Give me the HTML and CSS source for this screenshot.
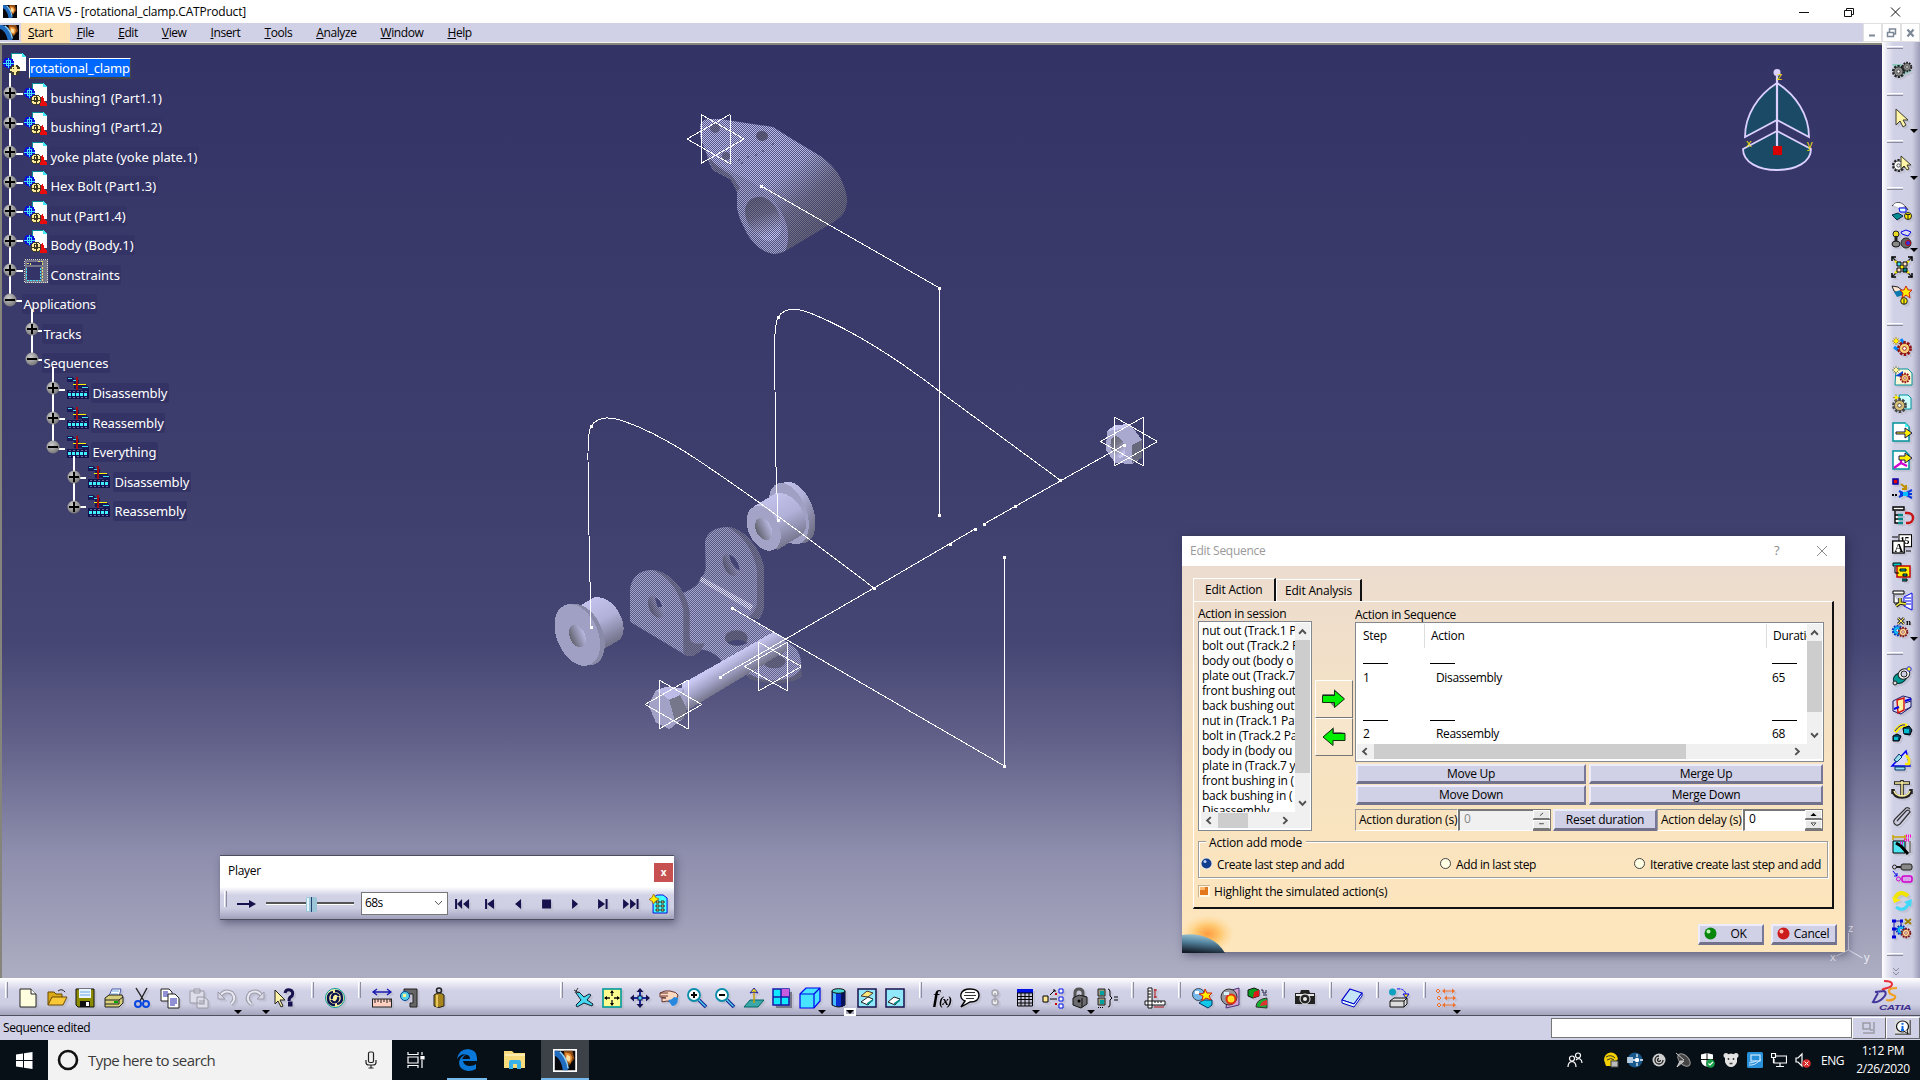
FILE: index.html
```html
<!DOCTYPE html>
<html lang="en">
<head>
<meta charset="utf-8">
<title>CATIA V5 - [rotational_clamp.CATProduct]</title>
<link rel="stylesheet" href="styles.css">
</head>
<body>
<svg class="defs" width="0" height="0" aria-hidden="true">
  <defs>
    <symbol id="logo" viewBox="0 0 20 20"><rect width="20" height="20" fill="#08080c"/><path d="M9 0h8l2 8-5 7-5-6z" fill="#8a4a14"/><path d="M10 2l5 1 2 4-2 6-4-3z" fill="#e88a30"/><path d="M12 4l3 2v4l-2 1-2-3z" fill="#ffe0a0"/><path d="M3 0c5 4 8 10 10 20H8C7 12 4 7 0 5V0z" fill="#1f6cc0"/><path d="M5 1c5 5 7 10 8 17" stroke="#8cd0ff" stroke-width="1.600" fill="none"/></symbol>
    <symbol id="part" viewBox="0 0 24 24"><path d="M8 1h11l4 4v14H12L8 12z" fill="#fff"/><path d="M8 8V1h11" stroke="#008c99" fill="none"/><path d="M19 1l4 4h-4z" fill="#3fe8f4"/><circle cx="5.500" cy="11" r="5.500" fill="#0d10d8"/><path d="M3.500 8.500h4v5h-4zM5.500 6v10M0 11h11" stroke="#40dcf8" fill="none"/><path d="M16 15l3-1 1 4 3 4v2h-7z" fill="#e80c0c"/><circle cx="12" cy="18" r="5.500" fill="#40402a"/><circle cx="12" cy="18" r="4.500" fill="#ffe99a"/><path d="M10.500 15.500h3v4h-3zM12 13v10M7 18h10" stroke="#3b3620" fill="none"/></symbol>
    <symbol id="seq" viewBox="0 0 22 22"><path d="M0 0h5l3 3h4v5h7l3 3v5H15v-4H7V5H0z" fill="#191957"/><path d="M1 1.500h4M6 3.500h3M15 10.500h6M18 14.500h3" stroke="#3fe0f0"/><path d="M6 7.500h13" stroke="#fff200"/><rect x="9" width="2" height="13" fill="#a40c10"/><rect y="13" width="22" height="9" fill="#131350"/><path d="M1 17.500h20" stroke="#3ff0ff" stroke-width="3" stroke-dasharray="3 1"/><path d="M2 14.500h19M2 20.500h19" stroke="#6b6b98" stroke-dasharray="2 2"/></symbol>
    <radialGradient id="ballg" cx=".4" cy=".35" r=".65"><stop offset="0" stop-color="#cdcdcd"/><stop offset="1" stop-color="#777"/></radialGradient>
    <g id="plus"><circle r="6.500" fill="url(#ballg)"/><path d="M-5 0H5M0-5V5" stroke="#000" stroke-width="2"/></g>
    <g id="minus"><circle r="6.500" fill="url(#ballg)"/><path d="M-5 0H5" stroke="#000" stroke-width="2"/></g>
    <symbol id="up" viewBox="0 0 8 6"><path d="M1 5l3-3.200L7 5" fill="none" stroke="#505050" stroke-width="1.700"/></symbol>
    <symbol id="down" viewBox="0 0 8 6"><path d="M1 1l3 3.200L7 1" fill="none" stroke="#505050" stroke-width="1.700"/></symbol>
    <symbol id="left" viewBox="0 0 6 8"><path d="M5 1L1.800 4 5 7" fill="none" stroke="#505050" stroke-width="1.700"/></symbol>
    <symbol id="right" viewBox="0 0 6 8"><path d="M1 1l3.200 3L1 7" fill="none" stroke="#505050" stroke-width="1.700"/></symbol>
    <pattern id="chk" width="2" height="2" patternUnits="userSpaceOnUse"><rect width="2" height="2" fill="#3c3c3c"/><path d="M0 0h1v1H0zM1 1h1v1H1z" fill="#fff"/></pattern>
    <mask id="dither" maskUnits="userSpaceOnUse" x="0" y="45" width="1882" height="933"><rect y="45" width="1882" height="933" fill="url(#chk)" shape-rendering="crispEdges"/></mask>
    <linearGradient id="tube" x1=".3" y1="0" x2=".75" y2="1"><stop offset="0" stop-color="#c4c4ee"/><stop offset=".45" stop-color="#b0b0d8"/><stop offset="1" stop-color="#66667a"/></linearGradient>
    <linearGradient id="hole"><stop offset="0" stop-color="#62626f"/><stop offset="1" stop-color="#b9b9e2"/></linearGradient>
    <linearGradient id="holev" x1="0" y1="0" x2=".3" y2="1"><stop offset="0" stop-color="#62626f"/><stop offset=".5" stop-color="#777789"/><stop offset="1" stop-color="#c8c8f4"/></linearGradient>
    <linearGradient id="arm" gradientUnits="userSpaceOnUse" x1="765" y1="165" x2="815" y2="225"><stop offset="0" stop-color="#babae8"/><stop offset=".25" stop-color="#b4b4e0"/><stop offset=".65" stop-color="#7c7c92"/><stop offset="1" stop-color="#6a6a78"/></linearGradient>
    <linearGradient id="shaft" gradientUnits="userSpaceOnUse" x1="560" y1="600" x2="600" y2="665"><stop offset="0" stop-color="#c8c8f2"/><stop offset=".4" stop-color="#a6a6cc"/><stop offset="1" stop-color="#6a6a7e"/></linearGradient>
    <g id="star" fill="none" stroke="#fff"><path d="M-14.500-24.500v49M14.500-24.500v49M-28.500 0L14.500-24.500M-28.500 0L14.500 24.500M28.500 0L-14.500-24.500M28.500 0L-14.500 24.500"/></g>
    <g id="gear"><circle cx="10" cy="10" r="7" fill="none" stroke-width="3.500" stroke-dasharray="2.800 1.600"/><circle cx="10" cy="10" r="6"/><circle cx="10" cy="10" r="2.200" fill="#fff"/></g>
  </defs>
</svg>

<div class="window">
  <header class="titlebar">
    <svg class="applogo" width="14" height="13"><svg viewBox="0 0 20 20" width="14" height="13" preserveAspectRatio="none"><use href="#logo"/></svg></svg>
    <span class="title">CATIA V5 - [rotational_clamp.CATProduct]</span>
    <svg class="winbtns" width="112" height="20" fill="none" stroke="#111"><path d="M0 10.500h10M45.500 8.500h7v6h-7zM47.500 8V6.500h7v6H53M92 5.500l9 9M101 5.500l-9 9"/></svg>
  </header>
  <nav class="menubar">
    <svg class="menulogo" width="19" height="16"><svg viewBox="0 0 20 20" width="19" height="15" preserveAspectRatio="none"><use href="#logo"/></svg></svg>
    <span class="menu active"><u>S</u>tart</span><span class="menu"><u>F</u>ile</span><span class="menu"><u>E</u>dit</span><span class="menu"><u>V</u>iew</span><span class="menu"><u>I</u>nsert</span><span class="menu"><u>T</u>ools</span><span class="menu"><u>A</u>nalyze</span><span class="menu"><u>W</u>indow</span><span class="menu"><u>H</u>elp</span>
    <div class="mdi">
      <svg width="17" height="17"><path d="M5 11.500h6" stroke="#7c8898" stroke-width="2"/></svg>
      <svg width="17" height="17" fill="none" stroke="#7c8898" stroke-width="1.500"><path d="M4.500 8.500h6v4h-6zM6.500 8V5h6v5h-2"/></svg>
      <svg width="17" height="17" stroke="#7c8898" stroke-width="2.200"><path d="M5.500 5.500l6 7M11.500 5.500l-6 7"/></svg>
    </div>
  </nav>

  <div class="middle">
    <main class="viewport">
      <svg class="scene" viewBox="0 45 1882 933" width="1882" height="933">
        <g mask="url(#dither)">
          <path d="M700 137L700 125C702 121 704 120 707 119L720 119 773 127 792 139 822 157C832 165 837 171 840 177 845 187 848 197 847 203L845 211C842 216 838 219 834 222L787 250C783 253 779 254 775 254 768 253 764 251 760 248 752 240 747 233 744 227 740 220 738 213 737 207L737 192C736 187 733 182 730 179L713 170C710 165 708 160 707 155z" fill="url(#arm)"/>
          <path d="M713 170L716 164 748 180C768 190 782 208 787 226 789 236 788 246 785 251L775 254C760 253 748 238 744 227 739 218 737 208 737 203L737 192C736 186 733 182 730 179z" fill="#a6a6ce"/>
          <path d="M707 155L713 170 730 179 737 192 740 188 732 176 717 166z" fill="#77778e"/>
          <path d="M762 197C774 200 783 215 781 229 780 239 772 243 764 240 753 234 745 222 745 211 746 201 753 196 762 197z" fill="url(#holev)"/>
          <ellipse cx="762" cy="136" rx="6" ry="5" fill="#666678"/><ellipse cx="715" cy="128" rx="5" ry="5" fill="#73738a"/><ellipse cx="726" cy="156" rx="4" ry="4" fill="#73738a"/>
          <path d="M741 163h2M747 157h2M755 155h2M762 151h2M772 144h2M738 160h2" stroke="#444460"/>
        </g>
        <g transform="translate(540 460) scale(.33333)" shape-rendering="crispEdges">
          <g>
            <ellipse cx="766" cy="157" rx="54" ry="96" transform="rotate(-20 766 157)" fill="url(#tube)"/>
            <ellipse cx="746" cy="161" rx="54" ry="96" transform="rotate(-20 746 161)" fill="#a0a0c4"/>
            <path d="M640 140L710 98C755 95 792 140 798 185 800 205 795 218 780 228L712 270z" fill="url(#tube)"/>
            <ellipse cx="671" cy="205" rx="46" ry="71" transform="rotate(-25 671 205)" fill="#a3a3c8"/>
            <ellipse cx="671" cy="207" rx="23" ry="35" transform="rotate(-25 671 207)" fill="url(#hole)"/>
          </g>
          <g>
            <path d="M115 440L165 411C215 408 250 465 251 505 251 525 245 535 235 542L190 568z" fill="url(#tube)"/>
            <ellipse cx="126" cy="524" rx="62" ry="97" transform="rotate(-23 126 524)" fill="#8989a8"/>
            <ellipse cx="112" cy="525" rx="62" ry="97" transform="rotate(-23 112 525)" fill="#a0a0c4"/>
            <ellipse cx="112" cy="528" rx="23" ry="35" transform="rotate(-23 112 528)" fill="url(#hole)"/>
          </g>
        </g>
        <g mask="url(#dither)"><g transform="translate(540 460) scale(.33333)">
          <path d="M425 400C450 392 475 378 485 352L640 455 625 470 705 520 760 560C790 580 787 635 775 650 740 675 665 672 620 645L600 608H550C520 570 500 572 450 560z" fill="#a6a6cf"/>
          <path d="M485 352C495 340 497 330 497 320L495 245C500 215 530 201 562 201 610 203 662 265 671 320V440C670 455 662 470 655 478L625 468 636 450z" fill="#9d9dc2"/>
          <path d="M562 201C610 203 662 265 671 320V440C669 455 662 470 652 478L625 470C640 462 651 445 651 425V330C640 270 610 225 562 201z" fill="#75758c"/>
          <path d="M485 350L640 436 632 452 478 362z" fill="#e6e6ff"/>
          <path d="M270 485V390C275 345 305 330 338 330 390 335 440 390 449 455V545L500 552 455 588 440 587z" fill="#a3a3ca"/>
          <path d="M338 330C390 335 440 390 449 455V530C450 550 465 553 495 550L480 575 460 588 440 587 430 580V450C420 400 390 350 338 330z" fill="#75758c"/>
          <ellipse cx="573" cy="314" rx="22" ry="36" transform="rotate(-25 573 314)" fill="url(#hole)"/><path d="M568 283c18 8 30 28 31 50-18-10-30-28-31-50z" fill="#454575"/>
          <ellipse cx="349" cy="440" rx="22" ry="36" transform="rotate(-25 349 440)" fill="url(#hole)"/><path d="M344 412c12 5 20 14 23 28l-14 2z" fill="#454575"/>
          <ellipse cx="589" cy="534" rx="34" ry="23" fill="#666678"/><path d="M563 548q25-18 60 0-30 18-60 0z" fill="#454575"/>
          <ellipse cx="703" cy="605" rx="34" ry="20" fill="#666678"/><path d="M625 640C670 672 760 670 783 625L786 650C740 680 660 670 625 655z" fill="#666678"/>
        </g></g>
        <g transform="translate(540 460) scale(.33333)" shape-rendering="crispEdges">
          <path d="M425 672L695 519C720 515 745 540 743 570L440 752z" fill="url(#shaft)"/>
          <path d="M325 735L348 690 380 680 430 685 440 745 430 775 388 808 348 788z" fill="#a2a2c7"/><path d="M348 690L380 680 430 685 418 707 388 720z" fill="#bcbce6"/><path d="M388 720L420 705 440 745 432 775 405 785z" fill="#77778c"/>
        </g>
        <g shape-rendering="crispEdges"><path d="M1107 431l8-6 15-1 12 16v18l-10 6-17-1-9-13z" fill="#a9a9d0"/><path d="M1132 445l10-5v18l-10 5z" fill="#68687c"/><path d="M1107 431l8-6 15-1-9 5z" fill="#c6c6f0"/><ellipse cx="1118" cy="447" rx="7" ry="11" transform="rotate(-20 1118 447)" fill="url(#holev)"/></g>
        <g fill="none" stroke="#fff" stroke-width="1" shape-rendering="crispEdges">
          <path d="M761 186L939.500 288V515M1004.500 557V766L732 608M720 677L874 588 975 529M984 524L1124 445"/>
          <path d="M778 520L776 467 775 390C774 345 774 328 778 317C786 306 799 308 815 315C860 334 900 361 939 391C980 421 1020 451 1060 480"/>
          <path d="M591 627L589 535 588 460C588 440 588 434 591 426C599 415 612 417 626 422C665 436 700 461 740 489C786 521 830 555 874 588"/>
          <use href="#star" x="715.500" y="139"/><use href="#star" x="1129" y="441.500"/><use href="#star" x="673.500" y="704.500"/><use href="#star" x="773" y="666.500"/>
        </g>
        <path d="M759.500 186.500h3M938 288.500h3M938 515.500h3M776.500 317.500h3M589.500 426.500h3M1058.500 480.500h3M1122.500 445.500h3M872.500 588.500h3M948.500 544.500h3M973.500 529.500h3M982.500 524.500h3M1013.500 506.500h3M718.500 677.500h3M589.500 627.500h3M776.500 520.500h3M730.500 608.500h3M1003 766.500h3M1003 557.500h3" stroke="#fff" stroke-width="3" shape-rendering="crispEdges"/>
        <g stroke="#dcd0ff" stroke-width="1.800" fill="#1a4a66">
          <path d="M1777 83C1758 95 1745 115 1745 137L1777 120 1809 137C1809 115 1796 95 1777 83z"/>
          <path d="M1777 131L1743 149C1743 162 1758 170 1777 170S1811 162 1811 149z"/>
          <path d="M1777 76V146" stroke-width="2.200"/>
        </g>
        <circle cx="1777" cy="72.500" r="3.500" fill="#dcd0ff"/><rect x="1773" y="146" width="9" height="9" fill="#d60000"/>
        <g class="axis gold"><text x="1777" y="80">z</text><text x="1746" y="147">x</text><text x="1807" y="148">y</text></g>
        <path d="M1848.500 933v17l14 8M1848.500 950l-12 6" fill="none" stroke="#e4e4ee"/>
        <g class="axis"><text x="1848" y="932">z</text><text x="1830" y="961">x</text><text x="1864" y="961">y</text></g>
      </svg>

      <section class="tree">
        <svg class="wires" width="130" height="500" fill="none" stroke="#fff" stroke-width="2"><path d="M10 28V261M10 49h13M10 79h13M10 109h13M10 138h13M10 167h13M10 196h13M10 226h13M10 256h13M32 265V315M32 286h12M32 315h12M53 325V403M53 345h12M53 374h12M53 404h12M74 412V462M74 433h12M74 462h12"/></svg>
        <div class="row root"><svg width="24" height="24" viewBox="0 0 24 24"><path d="M8 1h11l4 4v14H12L8 12z" fill="#fff"/><path d="M8 8V1h11" stroke="#008c99" fill="none"/><path d="M19 1l4 4h-4z" fill="#3fe8f4"/><circle cx="5.500" cy="11" r="5.500" fill="#0d10d8"/><path d="M3.500 8.500h4v5h-4zM5.500 6v10M0 11h11" stroke="#40dcf8" fill="none"/><circle cx="12" cy="18" r="5.500" fill="#40402a"/><path d="M9.500 15.500h4v4h-4zM12 13v10M7 18h10" stroke="#ffe99a" fill="none" stroke-width="1.400"/></svg><span>rotational_clamp</span></div>
        <div class="row l1"><svg class="pi"><use href="#part"/></svg><span>bushing1 (Part1.1)</span></div>
        <div class="row l1"><svg class="pi"><use href="#part"/></svg><span>bushing1 (Part1.2)</span></div>
        <div class="row l1"><svg class="pi"><use href="#part"/></svg><span>yoke plate (yoke plate.1)</span></div>
        <div class="row l1"><svg class="pi"><use href="#part"/></svg><span>Hex Bolt (Part1.3)</span></div>
        <div class="row l1"><svg class="pi"><use href="#part"/></svg><span>nut (Part1.4)</span></div>
        <div class="row l1"><svg class="pi"><use href="#part"/></svg><span>Body (Body.1)</span></div>
        <div class="row l1"><svg class="pi" viewBox="0 0 24 24"><rect x=".5" y=".5" width="23" height="23" fill="#77778c" stroke="#d8d8d0" stroke-dasharray="1 1"/><path d="M3 3h15v3H3zM3 8h14v13H3z" fill="#343468"/><path d="M2.500 9v12h14V9" fill="none" stroke="#3fe0f8" stroke-dasharray="2 1"/><path d="M3 4h3v3M14 2h4v4M18 8v14" fill="none" stroke="#e8e070" stroke-dasharray="2 1"/></svg><span>Constraints</span></div>
        <div class="row l0"><span>Applications</span></div>
        <div class="row l2"><span>Tracks</span></div>
        <div class="row l2"><span>Sequences</span></div>
        <div class="row l3"><svg class="si"><use href="#seq"/></svg><span>Disassembly</span></div>
        <div class="row l3"><svg class="si"><use href="#seq"/></svg><span>Reassembly</span></div>
        <div class="row l3"><svg class="si"><use href="#seq"/></svg><span>Everything</span></div>
        <div class="row l4"><svg class="si"><use href="#seq"/></svg><span>Disassembly</span></div>
        <div class="row l4"><svg class="si"><use href="#seq"/></svg><span>Reassembly</span></div>
        <svg class="wires" width="130" height="500"><path d="M32 264V272M53 322V332M74 411V420" stroke="#fff" stroke-width="2"/><use href="#plus" x="10" y="48"/><use href="#plus" x="10" y="78"/><use href="#plus" x="10" y="107"/><use href="#plus" x="10" y="137"/><use href="#plus" x="10" y="166"/><use href="#plus" x="10" y="196"/><use href="#plus" x="10" y="225"/><use href="#minus" x="10" y="255"/><use href="#plus" x="32" y="284"/><use href="#minus" x="32" y="314"/><use href="#plus" x="53" y="343"/><use href="#plus" x="53" y="373"/><use href="#minus" x="53" y="402"/><use href="#plus" x="74" y="432"/><use href="#plus" x="74" y="462"/></svg>
      </section>

      <section class="player">
        <div class="ptitle"><span>Player</span><b>x</b></div>
        <div class="pbar">
          <i class="vgrip"></i>
          <svg width="20" height="16" class="parrow"><path d="M0 8h13" stroke="#17124e" stroke-width="2"/><path d="M12 4l7 4-7 4z" fill="#17124e"/></svg>
          <svg width="90" height="20" class="slider"><rect x="1" y="8" width="88" height="2" fill="#555"/><rect x="1" y="10" width="88" height="1" fill="#fff"/><rect x="41" y="3" width="11" height="15" rx="1.500" fill="#9cc6d8"/><path d="M43 4v13" stroke="#e4f6fc" stroke-width="2"/><path d="M46.500 3v15" stroke="#23406c"/></svg>
          <div class="combo"><span>68s</span><svg width="9" height="6" viewBox="0 0 8 6"><path d="M.5 1L4 4.700 7.500 1" fill="none" stroke="#555"/></svg></div>
          <svg class="pk" viewBox="0 0 20 20"><path d="M3 5h2v10H3zM10 5v10l-5-5zM17 5v10l-6-5z"/></svg>
          <svg class="pk" viewBox="0 0 20 20"><path d="M5 5h2v10H5zM14 5v10l-7-5z"/></svg>
          <svg class="pk" viewBox="0 0 20 20"><path d="M13 5v10l-6-5z"/></svg>
          <svg class="pk" viewBox="0 0 20 20"><path d="M6 5.500h9v9H6z"/></svg>
          <svg class="pk" viewBox="0 0 20 20"><path d="M7 5v10l6-5z"/></svg>
          <svg class="pk" viewBox="0 0 20 20"><path d="M5 5v10l7-5zM12.500 5h2v10h-2z"/></svg>
          <svg class="pk" viewBox="0 0 20 20"><path d="M2 5v10l6-5zM9 5v10l6-5zM15.500 5h2v10h-2z"/></svg>
          <svg class="pk" viewBox="0 0 20 20"><path d="M5 3l3-2h6l4 3v15H4V8z" fill="#4ff" stroke="#0010e0"/><path d="M7 7h3v2H7zM12 7h3v2h-3zM7 11h3v2H7zM12 11h3v2h-3zM7 15h3v2H7zM12 15h3v2h-3z" fill="#ffe9a0" stroke="#000" stroke-width=".8"/><path d="M4.500 0L6.500 3.500 10 5 6.500 7 4.500 10 3 7 0 5.500 3 3.500z" fill="#fff200" stroke="#a06a10" stroke-width=".8"/></svg>
        </div>
      </section>

      <section class="dialog">
        <div class="dtitle"><span>Edit Sequence</span><svg width="60" height="20"><text x="1" y="14" class="q">?</text><path d="M44 5l10 10M54 5L44 15" stroke="#8a8a8a" fill="none"/></svg></div>
        <div class="dbody">
          <div class="tabs"><span class="tab on">Edit Action</span><span class="tab">Edit Analysis</span></div>
          <div class="panel">
            <div class="cols">
              <div class="session">
                <div class="lbl">Action in session</div>
                <div class="listbox">
                  <div class="items"><p>nut out (Track.1 P</p><p>bolt out (Track.2 P</p><p>body out (body o</p><p>plate out (Track.7</p><p>front bushing out</p><p>back bushing out</p><p>nut in (Track.1 Pa</p><p>bolt in (Track.2 Pa</p><p>body in (body ou</p><p>plate in (Track.7 y</p><p>front bushing in (</p><p>back bushing in (</p><p>Disassembly</p></div>
                  <div class="vs"><svg width="9" height="7"><use href="#up"/></svg><i class="th1"></i><svg width="9" height="7"><use href="#down"/></svg></div>
                  <div class="hs"><svg width="7" height="9"><use href="#left"/></svg><i class="th2"></i><svg width="7" height="9"><use href="#right"/></svg></div>
                </div>
              </div>
              <div class="movers">
                <div class="abtn"><svg width="26" height="22" viewBox="0 0 26 22"><path d="M1 6h12V1l10 9-10 9" fill="#777"/><path d="M1.500 7.500h12v-5l10 8.500-10 8.500v-5h-12z" fill="#00f000" stroke="#103010"/></svg></div>
                <div class="abtn"><svg width="26" height="22" viewBox="0 0 26 22"><path d="M25 6H13V1L3 10z" fill="#777"/><path d="M24 7.500H12v-5L2 11l10 8.500v-5h12z" fill="#00f000" stroke="#103010"/></svg></div>
              </div>
              <div class="sequence">
                <div class="lbl">Action in Sequence</div>
                <div class="table">
                  <div class="grid">
                    <span class="h">Step</span><span class="h sep">Action</span><span class="h sep">Duratic</span>
                    <span class="r"><i></i></span><span class="r"><i></i></span><span class="r"><i></i></span>
                    <span class="v">1</span><span class="v in">Disassembly</span><span class="v">65</span>
                    <span class="r"><i></i></span><span class="r"><i></i></span><span class="r"><i></i></span>
                    <span class="v">2</span><span class="v in">Reassembly</span><span class="v">68</span>
                  </div>
                  <div class="vs"><svg width="9" height="7"><use href="#up"/></svg><i class="th3"></i><svg width="9" height="7"><use href="#down"/></svg></div>
                  <div class="hs"><svg width="7" height="9"><use href="#left"/></svg><i class="th4"></i><svg width="7" height="9"><use href="#right"/></svg></div>
                </div>
                <div class="btns">
                  <div class="btn">Move Up</div><div class="btn">Merge Up</div>
                  <div class="btn">Move Down</div><div class="btn">Merge Down</div>
                </div>
                <div class="durrow">
                  <span class="flbl a">Action duration (s)</span>
                  <span class="inp off">0</span><span class="spin"><svg viewBox="0 0 16 9"><path d="M6 6l4-3.500" stroke="#222"/></svg><svg viewBox="0 0 16 9"><path d="M5 3.500h6" stroke="#222"/></svg></span>
                  <div class="btn reset">Reset duration</div>
                  <span class="flbl b">Action delay (s)</span>
                  <span class="inp">0</span><span class="spin"><svg viewBox="0 0 16 9"><path d="M4 6.500l4-4 4 4z"/></svg><svg viewBox="0 0 16 9"><path d="M5 2.500h6L8 6z" fill="#fff" stroke="#222"/></svg></span>
                </div>
              </div>
            </div>
            <div class="mode">
              <span class="legend">Action add mode</span>
              <label class="r1"><svg width="13" height="13"><circle cx="6.500" cy="6.500" r="6" fill="#efe8e0"/><circle cx="6.500" cy="6.500" r="5" fill="#123c8c"/><circle cx="5" cy="4.500" r="1.500" fill="#b8d0f8"/></svg>Create last step and add</label>
              <label class="r2"><svg width="13" height="13"><circle cx="6.500" cy="6.500" r="5" fill="#ffffe4" stroke="#444"/></svg>Add in last step</label>
              <label class="r3"><svg width="13" height="13"><circle cx="6.500" cy="6.500" r="5" fill="#ffffe4" stroke="#444"/></svg>Iterative create last step and add</label>
            </div>
            <div class="check"><svg width="12" height="12"><rect width="12" height="12" fill="#fff6e4"/><path d="M0 12V0h12" fill="none" stroke="#c8b490" stroke-width="2"/><rect x="2" y="2" width="8" height="8" fill="#e2761c"/><path d="M2 2h5v3H2z" fill="#ffb870"/></svg>Highlight the simulated action(s)</div>
          </div>
          <div class="dfoot">
            <svg class="planet" width="52" height="38" viewBox="0 0 52 38"><defs><radialGradient id="glow" cx=".55" cy=".5" r=".5"><stop offset="0" stop-color="#ff9c40"/><stop offset=".45" stop-color="#ffc870"/><stop offset="1" stop-color="#ffe0a8" stop-opacity="0"/></radialGradient><linearGradient id="pl" x1=".6" y1="0" x2=".4" y2="1"><stop offset="0" stop-color="#a4ccd8"/><stop offset=".45" stop-color="#5484a0"/><stop offset="1" stop-color="#141c26"/></linearGradient></defs><ellipse cx="23" cy="19" rx="28" ry="20" fill="url(#glow)"/><path d="M0 20C14 17 34 22 43 38H0z" fill="url(#pl)"/></svg>
            <div class="btn ok"><svg width="14" height="14"><circle cx="6.500" cy="6.500" r="6" fill="#08860c"/><circle cx="4.500" cy="4.500" r="2" fill="#b8f4b8"/></svg><span>OK</span></div>
            <div class="btn ok"><svg width="14" height="14"><circle cx="6.500" cy="6.500" r="6" fill="#cc1c1c"/><circle cx="4.500" cy="4.500" r="2" fill="#ffc4b8"/></svg><span>Cancel</span></div>
          </div>
        </div>
      </section>
    </main>

    <aside class="sidebar">
      <i class="hgrip"></i>
      <div class="slot tall"><svg viewBox="0 0 20 20"><path d="M0 3h9l11 7-12 6z" fill="#8fc8be"/><use href="#gear" fill="#8c8c8c" stroke="#222" transform="translate(-1 3) scale(.75)"/><use href="#gear" fill="#8c8c8c" stroke="#222" transform="translate(9 0) scale(.6)"/></svg></div>
      <i class="hgrip"></i>
      <div class="slot tall"><svg viewBox="0 0 20 20"><path d="M4 1v16l4-4 3 6 3-2-3-5h5z" fill="#fff3a8" stroke="#3b3b2a"/></svg><em></em></div>
      <i class="hgrip"></i>
      <div class="slot tall"><svg viewBox="0 0 20 20"><use href="#gear" fill="#fff" stroke="#222" transform="translate(-1 3) scale(.75)"/><path d="M9 1v13l3-3 3 4 2-1-2-4h4z" fill="#fff3a8" stroke="#3b3b2a"/></svg><em></em></div>
      <i class="hgrip"></i>
      <div class="slot"><svg viewBox="0 0 20 20"><path d="M0 5q6-7 13 0l3 4" fill="none" stroke="#222"/><path d="M1 4q5-5 12 1l-6 2z" fill="#fff"/><path d="M7 7h7v4H8z" fill="#dff" stroke="#00e"/><path d="M0 14l6-2 5 3-6 4z" fill="#008c90" stroke="#124"/><circle cx="16" cy="15" r="3.500" fill="#ffee00" stroke="#222"/><path d="M16 13v5M14 13.500h4" stroke="#222"/></svg></div>
      <div class="slot"><svg viewBox="0 0 20 20"><path d="M9 3l5-2 5 2-3 4-6-2z" fill="#dde" stroke="#00e"/><circle cx="4" cy="5" r="3" fill="#e8d820" stroke="#222"/><path d="M4 7v6" stroke="#222" stroke-width="3"/><ellipse cx="4" cy="15" rx="4" ry="3" fill="#888" stroke="#111"/><circle cx="14" cy="14" r="5" fill="#666" stroke="#222"/><circle cx="16" cy="14" r="2.500" fill="#3030e0" stroke="#c00"/></svg><em></em></div>
      <div class="slot"><svg viewBox="0 0 20 20"><path d="M0 0l20 20M20 0L0 20" stroke="#222" stroke-width="1.200"/><path d="M0 4V0h4M16 0h4v4M0 16v4h4M16 20h4v-4" fill="none" stroke="#000" stroke-width="1.500"/><path d="M3 4l14 12M17 4L3 16" stroke="#ffee00" stroke-width="2"/><path d="M5 5h4v4H5z" fill="#4de" stroke="#000"/><path d="M11 5h4v4h-4zM5 11h4v4H5z" fill="#ffe0c0" stroke="#000"/><path d="M11 11h4v4h-4z" fill="#088" stroke="#000"/></svg></div>
      <div class="slot"><svg viewBox="0 0 20 20"><path d="M0 1l6 1 5 4-4 3-5-3z" fill="#ffe4d0" stroke="#222"/><path d="M2 7l7-2 2 5-6 2z" fill="#0878b0"/><path d="M14 1l2 4h4l-3 3 1 5-4-3-4 3 1-5-3-3h4z" fill="#ffee00" stroke="#d02010"/><circle cx="12" cy="16" r="3.300" fill="#ffee00" stroke="#222"/><path d="M12 14v5" stroke="#222"/></svg></div>
      <i class="hgrip g2"></i>
      <div class="slot"><svg viewBox="0 0 20 20"><path d="M2 10l4 3M9 2l3 5" stroke="#08f" stroke-width="3"/><use href="#gear" fill="#f8d078" stroke="#901010" transform="translate(4 3) scale(.85)"/><path d="M4 0v8M0 4h8M1.500 1.500l5 5M6.500 1.500l-5 5" stroke="#b89000"/><path d="M4 2v4M2 4h4" stroke="#ffee00" stroke-width="2"/></svg></div>
      <div class="slot"><svg viewBox="0 0 20 20"><path d="M4 3h12l4 4v12H3z" fill="#fff8d8" stroke="#00929a"/><path d="M3 10l8-5v6z" fill="#0848d0"/><use href="#gear" fill="#f8d078" stroke="#901010" transform="translate(7 6) scale(.6)"/><path d="M4 0v8M0 4h8M1.500 1.500l5 5M6.500 1.500l-5 5" stroke="#8a8440"/><path d="M4 2v4M2 4h4" stroke="#fff4a0" stroke-width="2"/></svg></div>
      <div class="slot"><svg viewBox="0 0 20 20"><path d="M7 1h9l3 3v11H10z" fill="#cff" stroke="#00929a"/><use href="#gear" fill="#d8c078" stroke="#444" transform="translate(-1 3) scale(.85)"/><path d="M4 0v7M1 3.500h7" stroke="#a89c10"/><path d="M4 2v3M3 3.500h3" stroke="#ffee00" stroke-width="2"/></svg></div>
      <div class="slot"><svg viewBox="0 0 20 20"><path d="M1 1h12l4 4v14H1z" fill="#fff" stroke="#00929a" stroke-width="1.500"/><path d="M13 1l4 4h-4z" fill="#4ff"/><path d="M4 10h9V6l7 5-7 5v-4H4z" fill="#ffee00" stroke="#151550"/></svg></div>
      <div class="slot"><svg viewBox="0 0 20 20"><path d="M1 1h12l4 4v14H1z" fill="#fff" stroke="#00929a" stroke-width="1.500"/><path d="M2 18l7-5V8M9 13l6 3" stroke="#d000d0" stroke-width="2.200" fill="none"/><path d="M7 6h6V3l7 5-7 5v-3H7z" fill="#ffee00" stroke="#151550"/></svg></div>
      <div class="slot"><svg viewBox="0 0 20 20"><path d="M1 1h5v5H1z" fill="#e00808" stroke="#00a" stroke-width="1.500"/><path d="M9 6l5 4m0-3v4h-4" stroke="#c09000" stroke-width="2" fill="none"/><path d="M0 17h6" stroke="#000" stroke-width="2" stroke-dasharray="2 1"/><path d="M7 13l13 7M7 19l13-7M8 16h12" stroke="#0838e0" stroke-width="2"/><rect x="11" y="14" width="5" height="4" fill="#0bf"/></svg></div>
      <div class="slot"><svg viewBox="0 0 20 20"><path d="M1 1h11v3H1zM3 5v12h5M3 9h8M3 13h8" fill="#fff" stroke="#000" stroke-width="1.400"/><path d="M6 9h5M6 13h5M6 17h5" stroke="#088" stroke-width="2.500"/><path d="M13 7h3a4 4 0 010 10h-2" fill="none" stroke="#c81414" stroke-width="2.500"/></svg></div>
      <div class="slot"><svg viewBox="0 0 20 20" class="a15"><rect x="7" y=".7" width="12.500" height="12" fill="#fff" stroke="#000"/><text x="8" y="9.500" font-size="10">15</text><rect x=".7" y="7" width="11.500" height="12" fill="#fff" stroke="#000" stroke-width="1.300"/><text x="2.500" y="17.500" font-size="12">A</text><path d="M0 3h6M14 17h5" stroke="#000"/></svg></div>
      <div class="slot"><svg viewBox="0 0 20 20"><path d="M1 1h8v3H1z" fill="#0cc" stroke="#000"/><path d="M5 4h13v11H5z" fill="#ffee00" stroke="#c00808" stroke-width="1.500"/><path d="M3 5v6h4" fill="none" stroke="#000"/><path d="M8 7h6v2H8zM11 12h4v2h-4z" fill="#0cc" stroke="#000"/><path d="M10 17h5v2h-5" fill="#0aa" stroke="#000"/></svg></div>
      <div class="slot"><svg viewBox="0 0 20 20"><path d="M1 1h11v3H1zM2 5v8h5" fill="#fff" stroke="#000"/><path d="M20 3v17l-8-4V7z" fill="#fff" stroke="#00e"/><path d="M13 8h6M13 11h6M13 14h6" stroke="#00e"/><path d="M4 16l4-3V8m0 5l6 1" stroke="#222" stroke-width="3.500" fill="none"/><path d="M4 16l4-3V8m0 5l6 1" stroke="#f0e840" stroke-width="1.500" fill="none"/></svg></div>
      <div class="slot"><svg viewBox="0 0 20 20"><path d="M6 0l6 6M12 0L6 6" stroke="#444" stroke-width="3"/><path d="M6 0l6 6M12 0L6 6" stroke="#ffe860"/><text x="14" y="7" font-size="9">n</text><use href="#gear" fill="#1cf" stroke="#003cc0" transform="translate(-1 6) scale(.65)"/><use href="#gear" fill="#fd9" stroke="#801010" transform="translate(5 8) scale(.6)"/></svg><em></em></div>
      <i class="hgrip g3"></i>
      <div class="slot"><svg viewBox="0 0 20 20"><ellipse cx="8" cy="12" rx="7" ry="5" transform="rotate(-25 8 12)" fill="#009a96" stroke="#033"/><ellipse cx="12" cy="8" rx="6" ry="5" transform="rotate(-25 12 8)" fill="#eee" stroke="#222"/><circle cx="12" cy="8" r="3" fill="#cfcfe4" stroke="#222"/><circle cx="17" cy="3" r="2.200" fill="#ff0" stroke="#22f"/><circle cx="3" cy="17" r="2" fill="#ddd" stroke="#222"/></svg></div>
      <div class="slot"><svg viewBox="0 0 20 20" fill="none" stroke="#181868"><path d="M1 6l10-5 8 2v9L9 19l-8-3z" fill="#d8d8f0"/><path d="M5 5l7-2v12l-6 3z" fill="#fff3a0" stroke="#d01010" stroke-width="1.400"/><path d="M2 14l5-2M13 6l6-2" stroke="#00e" stroke-width="2"/><path d="M13 8l6-2M13 15l6-3"/></svg></div>
      <div class="slot"><svg viewBox="0 0 20 20"><path d="M3 9q6-9 12-6" fill="none" stroke="#ffee00" stroke-width="4"/><path d="M3 8q5-7 10-6" fill="none" stroke="#1010e0"/><path d="M11 5l6-2 3 4-2 5-6-1z" fill="#046" stroke="#000"/><path d="M12 6h5v4h-5z" fill="#0bc"/><path d="M1 13l4-2 4 2-2 5H1z" fill="#046" stroke="#000"/><path d="M2 14h4v3H2z" fill="#0bc"/></svg></div>
      <div class="slot"><svg viewBox="0 0 20 20"><path d="M0 15L14 0l4 15z" fill="#d8d8f8" stroke="#00e" stroke-width="1.500"/><path d="M2 9l5-6 3 3-5 5z" fill="#9de" stroke="#036"/><path d="M14 4l3 4v5h-4" stroke="#ffe800" stroke-width="2.500" fill="none"/><path d="M3 16h10v3H3z" fill="#9de" stroke="#036"/></svg></div>
      <div class="slot"><svg viewBox="0 0 20 20" fill="none"><path d="M10 1v16M2 4h16M1 11q1 7 9 7t9-7M1 10v5M19 10v5" stroke="#222" stroke-width="3.500"/><path d="M10 2v15M3 4h14M2 12q2 5 8 5t8-5" stroke="#fff3a0" stroke-width="1.500"/></svg></div>
      <div class="slot"><svg viewBox="0 0 20 20" fill="none" stroke="#333" stroke-width="1.200"><path d="M5 14L14 4q3-2 4 1L8 17q-4 3-6-1-1-2 1-4L14 1q2-1 4 1"/></svg></div>
      <div class="slot"><svg viewBox="0 0 20 20"><path d="M1 0v5M13 0v5M1 2h12" stroke="#c8a400" stroke-width="1.500"/><path d="M1 6h12v12H1z" fill="#4ee4f0" stroke="#000"/><path d="M4 8l5 3 7 8" stroke="#000" stroke-width="3"/><path d="M14 1h5M12 5h6M8 8h4" stroke="#f0c" stroke-dasharray="1 1" stroke-width="3"/><path d="M18 6v12" stroke="#888" stroke-width="2"/></svg></div>
      <div class="slot"><svg viewBox="0 0 20 20"><circle cx="2.500" cy="4" r="2" fill="none" stroke="#222"/><path d="M4 4h5" stroke="#222" stroke-width="2"/><rect x="9" y="1" width="11" height="6" rx="2" fill="#888" stroke="#222"/><path d="M1 8l4 5m0-3v3H2" stroke="#00e" fill="none"/><circle cx="6.500" cy="16" r="2" fill="none" stroke="#d000d0"/><rect x="10" y="13" width="10" height="6" rx="2" fill="#d8a0e8" stroke="#d000d0" stroke-width="1.500"/></svg></div>
      <div class="slot"><svg viewBox="0 0 20 20" fill="none"><path d="M16 5Q8-2 3 7" stroke="#f0e400" stroke-width="4"/><path d="M0 6l9 3-7 3z" fill="#ffee00"/><path d="M4 16q8 6 13-4" stroke="#40d8f8" stroke-width="3"/><path d="M12 11l8-3-1 8z" fill="#40d8f8"/></svg></div>
      <div class="slot"><svg viewBox="0 0 20 20"><path d="M2 2h8M2 2v16M9 2v6M2 10h6" stroke="#1818a0"/><path d="M0 2h4M8 2h3M0 10h4M0 18h4" stroke="#00d" stroke-width="3"/><path d="M13 0l6 5M19 0l-6 5" stroke="#a08000" stroke-width="2"/><use href="#gear" fill="#1cf" stroke="#003cc0" transform="translate(3 5) scale(.6)"/><use href="#gear" fill="#fd9" stroke="#801010" transform="translate(8 8) scale(.6)"/></svg></div>
      <i class="hgrip g4"></i>
      <svg class="more" width="8" height="9"><path d="M1 1l3 3 3-3M1 5l3 3 3-3" fill="none" stroke="#8a8a9c"/></svg>
    </aside>
  </div>

  <footer class="toolbar">
    <div class="grp g1"><i class="vgrip"></i>
      <div><svg viewBox="0 0 20 20"><path d="M2 1h11l5 5v13H2z" fill="#ffffe0" stroke="#222"/><path d="M13 1v5h5" fill="#fff" stroke="#222"/></svg></div>
      <div><svg viewBox="0 0 20 20"><path d="M1 17V4h6l2 2h6v3" fill="#d8a818" stroke="#6a4800"/><path d="M1 17L5 9h15l-4 8z" fill="#f8c838" stroke="#6a4800"/><path d="M11 3q4-3 7 1" fill="none" stroke="#222"/></svg></div>
      <div><svg viewBox="0 0 20 20"><path d="M1 1h18v18H3l-2-2z" fill="#8c8c00" stroke="#111"/><rect x="4" y="1" width="12" height="9" fill="#eaf4ff"/><path d="M5 4h10M5 7h10" stroke="#68a8e8"/><rect x="5" y="13" width="10" height="6" fill="#111"/><rect x="11" y="14" width="3" height="4" fill="#fff"/></svg></div>
      <div><svg viewBox="0 0 20 20"><path d="M5 8l3-7h9l-2 8z" fill="#fff" stroke="#4858a8"/><path d="M8 3h7M7 6h7" stroke="#68a8e8"/><path d="M1 10l4-3h13l1 2v6l-4 4H1z" fill="#d8d078" stroke="#222"/><path d="M1 12h14v4H1M15 12l4-3" fill="none" stroke="#222"/><path d="M10 14h4" stroke="#0a0" stroke-width="2"/></svg></div>
      <div><svg viewBox="0 0 20 20" fill="none"><path d="M4 0l8 13M15 0L8 13" stroke="#222" stroke-width="1.400"/><circle cx="6" cy="16" r="3" stroke="#0848e0" stroke-width="2"/><circle cx="14" cy="16" r="3" stroke="#0848e0" stroke-width="2"/></svg></div>
      <div><svg viewBox="0 0 20 20"><path d="M1 1h8l3 3v9H1z" fill="#fff" stroke="#222"/><path d="M3 4h5M3 6h5M3 8h5" stroke="#22a"/><path d="M8 6h7l4 4v10H8z" fill="#fff" stroke="#222"/><path d="M10 11h7M10 13h7M10 15h7M10 17h5" stroke="#22a"/></svg></div>
      <div><svg viewBox="0 0 20 20" fill="#dedeea" stroke="#9a9aa8"><path d="M1 3h14v12H1zM5 1h6v4H5zM8 9h7l4 3v8H8zM10 13h6M10 16h6"/></svg></div>
      <div><svg viewBox="0 0 20 20" fill="none"><path d="M3 8Q8 1 15 5q5 6-1 11" stroke="#9a9aa8" stroke-width="4"/><path d="M3 8Q8 1 15 5q5 6-1 11" stroke="#e8e8f2" stroke-width="2"/><path d="M1 4v7h7z" fill="#d8d8e8" stroke="#9a9aa8"/></svg><em></em></div>
      <div><svg viewBox="0 0 20 20" fill="none"><path d="M17 8Q12 1 5 5q-5 6 1 11" stroke="#9a9aa8" stroke-width="4"/><path d="M17 8Q12 1 5 5q-5 6 1 11" stroke="#e8e8f2" stroke-width="2"/><path d="M19 4v7h-7z" fill="#d8d8e8" stroke="#9a9aa8"/></svg><em></em></div>
      <div><svg viewBox="0 0 20 20"><path d="M1 2v14l3-3 3 6 2-1-3-6h5z" fill="#fff3a8" stroke="#222"/><path d="M11 5q1-4 5-3t2 6q-3 1-3 5M14 15h3v2h-3" fill="none" stroke="#17124e" stroke-width="3"/></svg></div>
    </div>
    <div class="grp"><i class="vgrip"></i>
      <div><svg viewBox="0 0 20 20" fill="none"><circle cx="10" cy="10" r="9.500" fill="#fff3a0" stroke="#009aa0"/><path d="M10 17Q3 17 3 10 3 5 8 4M10 3q7 0 7 7 0 5-5 6" stroke="#0c1450" stroke-width="2.500"/><path d="M14 8q-2-3-5-2-3 2-2 5M6 12q2 3 5 2 3-2 2-5" stroke="#0c1450" stroke-width="2.200"/></svg></div>
    </div>
    <div class="grp g3"><i class="vgrip"></i>
      <div><svg viewBox="0 0 20 20"><path d="M2 4h16M5 1L1 4l4 3M15 1l4 3-4 3" fill="none" stroke="#1818b0" stroke-width="1.300"/><rect x=".5" y="11" width="19" height="8" fill="#ffd0c0" stroke="#222"/><path d="M3 11v4M6 11v3M9 11v4M12 11v3M15 11v4M18 11v3" stroke="#222"/></svg></div>
      <div><svg viewBox="0 0 20 20"><path d="M4 1h13v18h-7v-4h3V6H4z" fill="#666" stroke="#222"/><circle cx="5" cy="8" r="4.500" fill="#58d0e0" stroke="#049"/><path d="M3 6h3v3H3z" fill="#ffef90"/></svg></div>
      <div><svg viewBox="0 0 20 20"><circle cx="10" cy="2.500" r="2.500" fill="none" stroke="#222" stroke-width="1.500"/><path d="M5 7q5-4 10 0v11q-5 3-10 0z" fill="#a8841c" stroke="#222"/><path d="M8 7v12" stroke="#e8c860" stroke-width="2"/></svg></div>
    </div>
    <div class="grp"><i class="vgrip"></i>
      <div><svg viewBox="0 0 20 20"><path d="M2 5l3-1 5 5 5-3 2 1-4 5 6 4-1 2-8-3-7 4-1-2 5-5z" fill="#48d8f0" stroke="#123"/><path d="M0 2l5 3M4 0L1 5" stroke="#333"/></svg></div>
      <div><svg viewBox="0 0 20 20"><rect x="1" y="1" width="18" height="18" fill="#ffff90" stroke="#009a98" stroke-width="1.600"/><path d="M10 3v5M10 12v5M3 10h5M12 10h5" stroke="#111" stroke-width="1.300"/><path d="M10 2l2 3H8zM10 18l2-3H8zM2 10l3-2v4zM18 10l-3-2v4z"/></svg></div>
      <div><svg viewBox="0 0 20 20"><path d="M10 2v16M2 10h16" stroke="#1828a0" stroke-width="2"/><path d="M10 0l3.500 4h-7zM10 20l3.500-4h-7zM0 10l4-3.500v7zM20 10l-4-3.500v7z" fill="#17124e"/><rect x="8" y="8" width="4" height="4" fill="#48d8f0" stroke="#17124e"/></svg></div>
      <div><svg viewBox="0 0 20 20"><path d="M1 5q5-3 10-2 7 1 8 4l-3 8-8-2-5 1v-4h4l-6-1z" fill="#ffd8c0" stroke="#633"/><path d="M1 5h8M2 8h7" stroke="#633"/><path d="M9 12q4 0 6-3l4 1q0 8-6 8z" fill="#2888e0"/></svg></div>
      <div><svg viewBox="0 0 20 20"><path d="M12 12l7 7" stroke="#129" stroke-width="3.500"/><path d="M12 12l6.500 6.500" stroke="#5de" stroke-width="1.300"/><circle cx="7" cy="7" r="6" fill="#fff" stroke="#088ca8" stroke-width="1.800"/><path d="M4 7h6M7 4v6" stroke="#000" stroke-width="2"/></svg></div>
      <div><svg viewBox="0 0 20 20"><path d="M12 12l7 7" stroke="#129" stroke-width="3.500"/><path d="M12 12l6.500 6.500" stroke="#5de" stroke-width="1.300"/><circle cx="7" cy="7" r="6" fill="#fff" stroke="#088ca8" stroke-width="1.800"/><path d="M4 7h6" stroke="#000" stroke-width="2"/></svg></div>
      <div><svg viewBox="0 0 20 20"><path d="M0 19l6-7h14l-6 7z" fill="#3aa8a8" stroke="#066"/><path d="M10 15V3" stroke="#c8a000" stroke-width="1.500"/><path d="M6 5l4-5 4 5-4-1z" fill="#ffe800" stroke="#22a"/></svg></div>
      <div><svg viewBox="0 0 20 20"><rect x="4" y="4" width="16" height="16" fill="#77778a"/><rect x="1" y="1" width="16" height="16" fill="#10e8ff" stroke="#1818a8" stroke-width="1.500"/><path d="M9 1h8v8H9z" fill="#c85ce0"/><path d="M9 1v16M1 9h16" stroke="#1818a8" stroke-width="1.500"/></svg></div>
      <div><svg viewBox="0 0 20 20"><path d="M0 6l6-6h14v13l-6 7H0z" fill="#48e4ff" stroke="#00e" stroke-width="1.200"/><path d="M0 6h14v14M14 6l6-6" fill="none" stroke="#00e" stroke-width="1.200"/></svg><em></em></div>
      <div><svg viewBox="0 0 20 20"><path d="M3 3v14q7 4 13 0V3z" fill="#0830d0" stroke="#111"/><path d="M12 4h4v13l-4 2z" fill="#081058"/><path d="M4 4h3v14l-3-1z" fill="#48b8ff"/><ellipse cx="9.500" cy="3" rx="6.500" ry="2.300" fill="#48d8d8" stroke="#111"/></svg><em class="w"></em></div>
      <div><svg viewBox="0 0 20 20"><rect x="1" y="1" width="18" height="18" fill="#90e8f8" stroke="#17124e" stroke-width="1.500"/><path d="M4 8l6-5 6 2-5 4z" fill="#ffe878" stroke="#433"/><path d="M4 14l7-5 5 2-5 6z" fill="#fff" stroke="#222"/><path d="M10 17l6-4v-2l-6 4z" fill="#088"/></svg></div>
      <div><svg viewBox="0 0 20 20"><rect x="1" y="1" width="18" height="18" fill="#90e8f8" stroke="#17124e" stroke-width="1.500"/><path d="M3 14l6-5 6 2-5 6z" fill="#fff" stroke="#222"/><path d="M9 17l6-4v-2l-6 4z" fill="#088"/></svg></div>
    </div>
    <div class="grp g5"><i class="vgrip"></i>
      <div><svg viewBox="0 0 20 20" class="fx"><text x="1" y="15" font-size="19">f</text><text x="7" y="17" font-size="13">(x)</text></svg></div>
      <div><svg viewBox="0 0 20 20"><path d="M10 1c6 0 9 2 9 6s-3 7-9 7l-9 5 4-6C2 12 0 9 1 6s4-5 9-5z" fill="#fff" stroke="#000" stroke-width="1.400"/><path d="M5 4.500h10M4 7.500h12M6 10.500h8" stroke="#333"/></svg></div>
      <div><svg viewBox="0 0 20 20" fill="#eee" stroke="#a4a4b0" stroke-width="1.500"><circle cx="8" cy="5" r="3"/><circle cx="8" cy="14" r="3"/><path d="M8 5v9"/></svg></div>
      <div><svg viewBox="0 0 20 20"><rect x="2" y="1" width="16" height="4" fill="#0010e8"/><path d="M2.500 5h15v13h-15zM2 8.500h16M2 11.500h16M2 15h16M6 5v13M10 5v13M14 5v13" fill="none" stroke="#000"/></svg><em></em></div>
      <div><svg viewBox="0 0 20 20"><path d="M0 8h5v6H0z" fill="#ffe890" stroke="#000"/><path d="M7 7l5-5M7 11h7M10 2h2v2" fill="none" stroke="#000"/><path d="M12 6h2M12 16h2" stroke="#c00" stroke-width="2"/><path d="M16 1h4v4h-4zM16 9h4v4h-4zM16 16h4v4h-4z" fill="#fff" stroke="#0010e8"/></svg></div>
      <div><svg viewBox="0 0 20 20"><path d="M5 9V5q0-4 4-4t4 4v5" fill="none" stroke="#555" stroke-width="3"/><path d="M3 10l6-3 8 2v7l-6 4-8-3z" fill="#6c6c70" stroke="#111"/><path d="M12 10v9" stroke="#111"/><circle cx="9" cy="13" r="1.500"/></svg><em></em></div>
      <div><svg viewBox="0 0 20 20"><path d="M0 1h7v7H0zM0 10h7v7H0z" fill="#9a9a80" stroke="#222"/><path d="M2 3h4v4H2zM2 12h4v4H2z" fill="#00a0a0"/><path d="M10 1q2 0 2 3v4l2 2-2 2v5q0 2-2 2M16 9h4M16 12h4" fill="none" stroke="#000"/><path d="M0 19.500h6" stroke="#000" stroke-dasharray="1 1"/></svg></div>
    </div>
    <div class="grp"><i class="vgrip"></i>
      <div><svg viewBox="0 0 20 20"><path d="M3 0h4v20H3zM0 13h20v4H0z" fill="#fff" stroke="#111"/><path d="M3 3h3M3 6h3M3 9h3M10 13v2M13 13v2M16 13v2" stroke="#111"/><path d="M10 1v9M9 2h3M9 9h3M9 19h10" stroke="#b01010"/></svg></div>
    </div>
    <div class="grp"><i class="vgrip"></i>
      <div><svg viewBox="0 0 20 20"><circle cx="6.500" cy="6.500" r="6" fill="#78b8e8" stroke="#345"/><path d="M3 3h4v3H3z" fill="#fff"/><path d="M7 15l4-3h9v5l-4 3z" fill="#10c8e8" stroke="#036"/><path d="M13 1l2 4 5 0-3 3 2 4-5-2-4 3 1-5-4-2 5-1z" fill="#ffee00" stroke="#d02010"/></svg></div>
      <div><svg viewBox="0 0 20 20"><path d="M8 3l11-3v17L6 20z" fill="#d8a0d0" stroke="#437"/><circle cx="9" cy="9" r="8" fill="#9898a0" stroke="#333"/><circle cx="11" cy="11" r="4.500" fill="#ffe020" stroke="#e03010" stroke-width="2"/><path d="M4 4h5v3H4z" fill="#d8f0ff"/></svg></div>
      <div><svg viewBox="0 0 20 20"><path d="M0 2l6-2 5 2v6l-6 2-5-2z" fill="#08a020" stroke="#111"/><path d="M6 4l5-2v6l-6 2z" fill="#e01818"/><path d="M13 2h2v3h3V2M15 7h4" stroke="#224" fill="none"/><path d="M8 19q0-8 11-9v10z" fill="#18b030" stroke="#333"/><path d="M12 18q1-5 7-6v5z" fill="#e03030"/></svg></div>
    </div>
    <div class="grp"><i class="vgrip"></i>
      <div><svg viewBox="0 0 20 20"><path d="M0 5h5l1-3h8l1 3h5v11H0z" fill="#222"/><path d="M1 6h18v2H1z" fill="#e8e8e8"/><circle cx="10" cy="11" r="5" fill="#222" stroke="#eee"/><circle cx="10" cy="11" r="2" fill="#eee"/></svg></div>
    </div>
    <div class="grp"><i class="vgrip"></i>
      <div><svg viewBox="0 0 20 20"><path d="M8 1l12 4-8 11-12-4z" fill="#c4e4f8" stroke="#00c" stroke-width="1.200"/><path d="M0 12v3l12 4 8-11V5l-8 11z" fill="#e8fff8" stroke="#00c"/></svg></div>
    </div>
    <div class="grp"><i class="vgrip"></i>
      <div><svg viewBox="0 0 20 20"><circle cx="3.500" cy="4" r="3.500" fill="#10a0c0"/><path d="M8 1q8-1 9 6" fill="none" stroke="#00e" stroke-dasharray="3 1"/><path d="M14 6h6l-3 4z" fill="#ffe800" stroke="#00e"/><path d="M1 13l4-3h13v6l-3 3H1zM1 13h14v6M15 13l3-3" fill="#ddd" stroke="#111"/></svg></div>
    </div>
    <div class="grp"><i class="vgrip"></i>
      <div><svg viewBox="0 0 20 20" fill="#f07028" stroke="#f07028"><path d="M8 3h9M10 10h9M8 17h10"/><path d="M6 3l3-2.500v5zM19 3l-3-2.500v5zM8 10l3-2.500v5zM20 10l-3-2.500v5zM6 17l3-2.500v5zM20 17l-3-2.500v5z" stroke="none"/><path d="M2 1l2 2-2 2-2-2zM3 8l2 2-2 2-2-2zM3 15l2 2-2 2-2-2z" fill="none"/></svg><em></em></div>
    </div>
    <svg class="ds" width="44" height="32" viewBox="0 0 44 32"><path d="M13 1q8 0 8 3t-5 4q-4 1-5 2" fill="none" stroke="#e83038" stroke-width="2"/><path d="M4 12l9-1q4 2-1 7t-10 4l5-9" fill="none" stroke="#44389c" stroke-width="2"/><path d="M26 8q-8 0-8 3t4 4 1 4q-3 2-8 1" fill="none" stroke="#f0a020" stroke-width="2.200"/><text x="8" y="29.500" textLength="32" lengthAdjust="spacingAndGlyphs">CATIA</text></svg>
  </footer>

  <div class="status">
    <span>Sequence edited</span>
    <div class="power"></div>
    <div class="sbtn"><svg width="16" height="14" fill="none" stroke="#9a9aa8" stroke-width="1.500"><path d="M2 2h7v6H2zM13 1v11H2M9 9h3"/></svg></div>
    <div class="sbtn"><svg width="16" height="15"><rect width="16" height="15" fill="#666"/><rect width="14.500" height="13.500" fill="#ddd"/><ellipse cx="7.500" cy="6.500" rx="6" ry="5.500" fill="#fff" stroke="#111" stroke-width="1.200"/><path d="M9 11l4 3-1-4" fill="#fff" stroke="#111"/><path d="M7.500 3v1.800M7.500 6v4M6 10h3" stroke="#0868e8" stroke-width="2"/></svg></div>
  </div>
</div>

<div class="taskbar">
  <div class="start"><svg width="17" height="17" fill="#fff"><path d="M0 2.500L7 1.500V8H0zM8 1.300L16.500 0v8H8zM0 9h7v6.500L0 14.500zM8 9h8.500v8L8 15.700z"/></svg></div>
  <div class="search"><svg width="22" height="22"><circle cx="11" cy="11" r="9" fill="none" stroke="#111" stroke-width="2.600"/></svg><span>Type here to search</span><svg width="12" height="18" fill="none" stroke="#222" stroke-width="1.200"><rect x="3.500" y="1" width="5" height="10.500" rx="1.500"/><path d="M1 9v2.500q0 2.500 3 2.500h4q3 0 3-2.500V9M6 14v3M3.500 17h5"/></svg></div>
  <div class="task tv"><svg width="18" height="18" fill="none" stroke="#fff" stroke-width="1.200"><path d="M1 1v2.500h10V1M1 6h10v6H1zM1 17v-2.500h10V17M15 1v3M15 9v8"/><path d="M14 5.500h3v2.500h-3z" fill="#fff"/></svg></div>
  <div class="task run"><svg width="22" height="22"><path d="M1 10Q3 0 12 0q9 1 9 9v3H7q1 5 7 5 4 0 6-2v5q-3 2-8 2-9-1-9-9 1-6 8-8-4 2-5 5h8q0-4-4-4.500Q5 4 1 10z" fill="#0a78d8"/></svg></div>
  <div class="task"><svg width="22" height="20"><path d="M0 1h8l2 2h11v15H0z" fill="#f8dc7c"/><path d="M1 4h20v2H1z" fill="#ffedb0"/><path d="M5 19v-7q0-2 2-2h8q2 0 2 2v7h-4v-5H9v5z" fill="#38b0e8"/></svg></div>
  <div class="task run on"><svg width="24" height="23"><rect width="24" height="23" fill="#fff"/><svg x="1.500" y="1.500" width="21" height="20" viewBox="0 0 20 20" preserveAspectRatio="none"><use href="#logo"/></svg></svg></div>
  <div class="tray">
    <div class="people"><svg viewBox="0 0 16 16" fill="none" stroke="#fff" stroke-width="1.200"><circle cx="5" cy="6.500" r="2.500"/><path d="M1 15q0-5 4-5.500 4 .5 4 5.500"/><circle cx="11" cy="3.500" r="2.500"/><path d="M9 8q2-2 4-1 2 1 2 4"/></svg></div>
    <div><svg viewBox="0 0 16 16"><path d="M1 8a7 7 0 0114-1L8 14H3z" fill="#f4d000"/><path d="M3 5q5-3 9 1M4 8q4-3 7 0" fill="none" stroke="#333"/><rect x="8" y="9" width="7" height="6" fill="#bbb" stroke="#444"/></svg></div>
    <div><svg viewBox="0 0 16 16"><circle cx="8" cy="8" r="7.500" fill="#18588c"/><path d="M0 6h6M0 8h8M0 10h6M10 2v3M10 11v3M13 8h3" stroke="#e8f4ff" stroke-width="1.300"/><circle cx="10" cy="8" r="2.200" fill="#fff"/></svg></div>
    <div><svg viewBox="0 0 16 16"><circle cx="8" cy="8" r="6.500" fill="#cfcfcf"/><path d="M8 4a4 4 0 104 4M8 6.500A1.500 1.500 0 109.500 8" fill="none" stroke="#222" stroke-width="1.300"/></svg></div>
    <div><svg viewBox="0 0 16 16"><ellipse cx="9" cy="8" rx="7.500" ry="4.500" transform="rotate(45 9 8)" fill="#444" stroke="#999"/><path d="M1 1l8 7M2 15l3-6h4z" stroke="#ccc" fill="#bbb"/></svg></div>
    <div><svg viewBox="0 0 16 16"><path d="M8 1l6 1.500V8q0 5-6 7-6-2-6-7V2.500z" fill="#fff"/><path d="M8 1v14M2 7.500h12" stroke="#111"/><circle cx="11.500" cy="11.500" r="4.300" fill="#18a048"/><path d="M9.500 11.500l1.500 1.500 3-3" fill="none" stroke="#fff" stroke-width="1.200"/></svg></div>
    <div><svg viewBox="0 0 16 16"><circle cx="3" cy="3.500" r="2.500" fill="#ddd"/><circle cx="13" cy="3.500" r="2.500" fill="#ddd"/><path d="M2 4q6-5 12 0v6q-2 5-6 5t-6-5z" fill="#e4e4e4"/><path d="M5.500 6v2M10.500 6v2M6.500 11.500h3" stroke="#444" stroke-width="1.500"/></svg></div>
    <div><svg viewBox="0 0 16 16"><rect width="16" height="16" rx="1.500" fill="#2890d8"/><rect x="4" y="3" width="9" height="6" fill="none" stroke="#cfeaff" stroke-width="1.200"/><path d="M2 13q6 1 12-6M2 11q4 0 7-2" fill="none" stroke="#cfeaff"/></svg></div>
    <div><svg viewBox="0 0 16 16" fill="none" stroke="#fff" stroke-width="1.200"><path d="M4 4h11.500v7H3V7M9 11v3M5 14.500h8M.5 1.500h4v4h-4zM2.500 6v5"/></svg></div>
    <div><svg viewBox="0 0 16 16"><path d="M1 6h2l4-4v12l-4-4H1z" fill="none" stroke="#fff" stroke-width="1.200"/><circle cx="11.500" cy="11.500" r="4.300" fill="#d82828"/><path d="M9.500 9.500l4 4M13.500 9.500l-4 4" stroke="#fff"/></svg></div>
    <span class="lang">ENG</span>
    <div class="clock"><span>1:12 PM</span><span>2/26/2020</span></div>
  </div>
</div>
</body>
</html>
```
FILE: styles.css
```css
* { box-sizing: border-box; }
html, body { margin: 0; height: 100%; }
body { display: flex; flex-direction: column; width: 1920px; height: 1080px; overflow: hidden; font: 12px/15px "Open Sans", "Noto Sans", sans-serif; letter-spacing: -.27px; color: #000; background: #d0d0e6; }
.defs { position: absolute; }
p { margin: 0; }
.window { display: flex; flex-direction: column; height: 1040px; }

.titlebar { display: flex; align-items: center; height: 23px; background: #fff; padding-left: 3px; }
.title { margin-left: 6px; letter-spacing: -.19px; }
.winbtns { margin-left: auto; margin-right: 9px; }
.menubar { display: flex; align-items: center; height: 20px; background: #d0d0e6; border-bottom: 1px solid #f4f4f4; }
.menulogo { margin-right: 2px; }
.menu { padding: 0 12px; line-height: 20px; letter-spacing: -.4px; }
.menu:first-of-type { padding-left: 7px; }
.menu.active { background: #ffe3b4; padding-right: 17px; margin-right: -5px; }
.mdi { display: flex; gap: 2px; margin-left: auto; margin-right: 1px; }
.mdi svg { background: #fff; outline: 1px solid #e0e0e0; display: block; }

.middle { display: flex; height: 935px; }
.viewport { position: relative; width: 1882px; border-top: 2px solid #85857c; border-left: 2px solid #85857c; background: linear-gradient(#333366, #3f3f6e 48%, #464674 64%, #5f5f88 74%, #8f8fae 87%, #adadc2); }
.scene { position: absolute; left: -2px; top: 0; }
.axis { font-size: 11px; fill: #f0f0f6; letter-spacing: 0; }
.axis.gold { fill: #f0e000; }

.tree { position: absolute; left: -2px; top: 0; padding-top: 4px; font-size: 13px; letter-spacing: -.03px; color: #fff; font-family: "Noto Sans", sans-serif; }
.wires { position: absolute; left: 0; top: 0; overflow: visible; }
.row { display: flex; align-items: flex-start; height: 29.550px; position: relative; }
.row span { line-height: 20px; margin-top: 9px; padding: 0 1.500px; background: #333365; border-radius: 2px; }
.row svg { flex: none; margin-top: 3px; shape-rendering: crispEdges; }
.pi { width: 24px; height: 24px; }
.si { width: 22px; height: 22px; }
.root { padding-left: 3px; }
.root span { margin: 9px 0 0 2px; line-height: 18px; padding: 0; letter-spacing: -.15px; background: #0068ff; border: 1px solid #fff; border-right-color: #444; border-bottom: 2px solid #444; border-radius: 0; }
.l0 { padding-left: 22px; letter-spacing: -.2px; }
.l1 { padding-left: 24px; }
.l1 span { margin-left: 1px; }
.l2 { padding-left: 42px; letter-spacing: -.1px; }
.l3 { padding-left: 67px; letter-spacing: -.15px; }
.l4 { padding-left: 88px; letter-spacing: -.15px; }
.l3 span { margin-left: 2px; }
.l4 span { margin-left: 3px; }

.player { position: absolute; left: 218px; top: 810px; width: 454px; height: 65px; border: 1px solid #4c4c5c; border-width: 1px 0; box-shadow: 2px 3px 8px rgba(30, 30, 60, .45); }
.ptitle { display: flex; justify-content: space-between; align-items: center; height: 31px; padding: 0 1px 0 8px; background: #fff; }
.ptitle span { margin-top: -2px; }
.ptitle b { width: 19px; height: 19px; margin-top: 2px; background: #c75050; color: #fff; font-size: 10px; line-height: 18px; text-align: center; }
.pbar { display: flex; align-items: center; height: 32px; padding: 1px 0 0 4px; background: linear-gradient(#fff, #d2d2e6 25%, #cfcfe4 65%, #a0a0bc); }
.pbar .vgrip { margin: -10px 10px 0 0; }
.slider { margin: 0 6px 0 8px; }
.combo { display: flex; justify-content: space-between; align-items: center; width: 87px; height: 23px; padding: 0 4px 2px 3px; background: #fff; border: 1px solid #777; letter-spacing: -.6px; }
.pk { width: 28.150px; height: 20px; fill: #17124e; filter: drop-shadow(2px 3px 0 rgba(190, 190, 205, .6)); }
.vgrip { width: 3px; height: 16px; border-left: 1px solid #fff; border-right: 1px solid #8c8c9c; flex: none; }

.dialog { position: absolute; left: 1180px; top: 490px; width: 663px; height: 417px; border-top: 1px solid #3c3c60; box-shadow: 3px 3px 9px rgba(30, 30, 60, .5); background: linear-gradient(#ecdccf 30px, #f6e2c2 50%, #fee6bc); }
.dtitle { display: flex; justify-content: space-between; align-items: center; height: 30px; padding: 0 12px 0 8px; background: #fff; color: #9a9a9a; letter-spacing: -.27px; }
.dtitle span { margin-top: -1px; }
.q { font-size: 13px; fill: #8a8a8a; }
.dbody { padding: 12px 11px 0; }
.tabs { display: flex; height: 23px; align-items: flex-end; letter-spacing: -.2px; }
.tab { width: 86px; height: 22px; line-height: 21px; padding-left: 8px; border-top: 1px solid #fff; border-left: 1px solid #fff; border-right: 2px solid #111; }
.tab.on { width: 83px; height: 23px; padding-left: 11px; }
.panel { height: 308px; border: 1px solid #fff; border-right: 2px solid #111; border-bottom: 2px solid #111; padding: 4px 4px 0; }
.cols { display: flex; height: 226px; }
.lbl { height: 15px; letter-spacing: -.3px; }
.session { width: 114px; }
.listbox { display: grid; grid-template: 189px 16px / 94px 15px; width: 114px; height: 210px; padding: 1px 2px; border: 1px solid #828790; background: #fff; }
.items { overflow: hidden; padding-left: 1px; white-space: nowrap; letter-spacing: -.22px; }
.vs, .hs { display: flex; align-items: center; background: #f0f0f0; }
.vs { flex-direction: column; }
.vs svg, .hs svg { margin: 5px; flex: none; }
.hs svg:first-child { margin: 0 6px 0 4px; }
.hs { grid-column: 1 / 3; }
.vs i, .hs i { display: block; background: #cdcdcd; }
.vs svg:last-child { margin-top: auto; }
.hs svg:last-child { margin: 0 21px 0 auto; }
.th1 { width: 15px; height: 133px; }
.th2 { width: 30px; height: 15px; }
.th3 { width: 15px; height: 71px; }
.th4 { width: 312px; height: 15px; }
.movers { padding: 74px 2px 0 3px; width: 43px; }
.abtn { display: flex; align-items: center; justify-content: center; width: 38px; height: 38px; border: 1px solid #fff; border-right: 1px solid #777; border-bottom: 1px solid #777; background: #f8e6cc; }
.sequence { padding-top: 1px; width: 469px; }
.table { display: grid; grid-template: 120px 15px / 450px 15px; height: 140px; padding: 1px; border: 1px solid #828790; background: #fff; }
.grid { display: grid; grid-template: 24px 16px 26px 31px 23px / 67px 342px 41px; overflow: hidden; letter-spacing: -.35px; }
.grid span { padding-left: 6px; white-space: nowrap; }
.grid .h { line-height: 23px; letter-spacing: -.27px; }
.grid .sep { border-left: 1px solid #ddd; }
.grid .r { display: flex; align-items: flex-end; }
.grid .r i { width: 25px; height: 1px; background: #000; }
.grid .v { line-height: 27px; }
.grid .v:nth-of-type(n+13) { line-height: 26px; }
.grid .v.in { padding-left: 12px; }
.btns { display: grid; grid-template: 20px 20px / 230px 234px; gap: 1px 3px; padding: 2px 0 0 1px; }
.btn { text-align: center; line-height: 16px; background: #d0d0e6; border: 2px solid #ececfa; border-right: 2px solid #77779a; border-bottom: 3px solid #72728c; }
.durrow { display: flex; height: 22px; margin-top: 4px; line-height: 20px; }
.flbl { border: 1px solid #9a9a9a; border-right-color: #fff; border-bottom-color: #fff; padding-left: 3px; white-space: nowrap; letter-spacing: -.22px; }
.flbl.a { width: 103px; }
.flbl.b { width: 86px; }
.inp { width: 75px; padding-left: 4px; line-height: 16px; background: #fff; border: 2px solid #777; border-width: 2px 0 0 2px; border-bottom: 1px solid #fff; }
.inp.off { background: #f0f0f0; color: #888; }
.durrow .inp:nth-last-child(2) { width: 62px; }
.spin { width: 18px; display: flex; flex-direction: column; gap: 1px; background: #777; padding: 1px 1px 2px 0; }
.spin svg { height: 9px; width: 17px; background: #e8e8e8; border: 1px solid #fff; border-bottom-color: #777; }
.reset { width: 104px; margin-left: 2px; height: 22px; line-height: 18px; }
.mode { position: relative; display: flex; height: 37px; margin: 9px 0 0; border: 1px solid #9c9c9c; box-shadow: inset 1px 1px #fff, 1px 1px #fff; padding: 15px 0 0 1px; letter-spacing: -.36px; }
.legend { position: absolute; left: 7px; top: -7px; padding: 0 4px 0 3px; background: #f9e4c2; letter-spacing: -.15px; }
label { display: flex; gap: 4px; white-space: nowrap; }
.check svg { margin-top: 1px; }
.r1 { width: 239px; }
.r2 { width: 194px; }
.check { display: flex; gap: 4px; margin-top: 6px; letter-spacing: -.2px; }
.dfoot { position: relative; display: flex; justify-content: flex-end; gap: 7px; margin-right: -3px; padding-top: 15px; }
.planet { position: absolute; left: -11px; top: 6px; }
.ok { display: flex; align-items: center; width: 66px; height: 21px; padding: 0 3px 0 4px; }
.ok span { flex: 1; }

.sidebar { width: 38px; height: 937px; margin-top: -1px; display: flex; flex-direction: column; background: linear-gradient(90deg, #fff, #e8e8f4 5px, #d0d0e6 12px, #cfcfe4 30px, #9c9cb8); padding-top: 4px; }
.hgrip { display: block; width: 16px; height: 3px; margin: 0 0 0 5px; border-top: 1px solid #fff; border-bottom: 1px solid #8c8c9c; flex: none; }
.slot { position: relative; height: 28.100px; flex: none; display: flex; align-items: center; padding-left: 10px; }
.slot svg { width: 20px; height: 20px; overflow: visible; filter: drop-shadow(2px 2px 0 rgba(180, 180, 195, .5)); }
.slot.tall { height: 44px; padding-bottom: 1px; }
.slot text { font-family: "Liberation Serif", serif; font-weight: bold; letter-spacing: -.5px; }
em { position: absolute; right: -1px; bottom: -2px; border: 4px solid transparent; border-top-color: #000; border-bottom: 0; }
.slot em { right: 2px; bottom: 1px; }
.slot.tall em { bottom: 7px; }
.hgrip + .slot:not(.tall) { margin-top: 7px; }
.slot + .hgrip.g2 { margin-top: 14px; }
.slot + .hgrip.g3, .slot + .hgrip.g4 { margin-top: 10px; }
.more { margin: 11px 0 0 10px; }

.toolbar { position: relative; display: flex; align-items: center; height: 38px; border-bottom: 1px solid #50505c; padding: 3px 0 0 5px; background: linear-gradient(#fff, #e4e4f2 7px, #d0d0e6 13px, #cfcfe4 26px, #a4a4be); }
.grp { display: flex; align-items: center; padding-right: 9.300px; }
.grp .vgrip { margin: -16px 6.300px 0 0; }
.grp > div { position: relative; width: 28.350px; height: 28px; display: flex; align-items: center; justify-content: center; }
.grp div svg { width: 20px; height: 20px; overflow: visible; filter: drop-shadow(2px 2px 0 rgba(180, 180, 195, .5)); }
.grp.g1 { padding-right: 13.700px; }
.grp.g3 { padding-right: 107.500px; }
.grp.g5 > div { width: 27.700px; }
em.w { outline: 2px solid #fff; }
.fx text { font-family: "Liberation Serif", serif; font-style: italic; font-weight: bold; letter-spacing: -1px; }
.ds { position: absolute; left: 1871px; top: 2px; }
.ds text { font: italic bold 8px "Liberation Sans", sans-serif; fill: #3c2c8c; }

.status { display: flex; align-items: center; height: 24px; background: #d0d0e6; padding: 0 0 1px 3px; letter-spacing: -.4px; }
.power { width: 301px; height: 20px; margin-left: auto; background: #fff; border: 1px solid #777; }
.sbtn { display: flex; align-items: center; justify-content: center; width: 34px; height: 22px; border: 1px solid #fff; border-right-color: #666; border-bottom-color: #666; }

.taskbar { display: flex; height: 40px; background: #070f17; color: #fff; }
.start { width: 48px; display: flex; align-items: center; justify-content: center; }
.search { display: flex; align-items: center; width: 344px; padding: 0 15px 0 9px; background: #f2f2f2; color: #3a3a3a; font-size: 15px; letter-spacing: -.57px; }
.search span { margin-left: 9px; flex: 1; }
.task { width: 48px; display: flex; align-items: center; justify-content: center; }
.task.tv { margin-right: 3px; }
.task.run { background: linear-gradient(#76b9ed, #76b9ed) 50% 100% / 40px 2px no-repeat; }
.task.run.on { background-color: #3c4248; background-size: 48px 2px; margin-left: 2px; }
.tray { display: flex; align-items: center; margin-left: auto; }
.tray > div:not(.clock) { width: 24px; display: flex; justify-content: center; }
.tray .people { margin-right: 12px; }
.tray svg { width: 16px; height: 16px; }
.lang { margin-left: 6px; width: 30px; letter-spacing: -.5px; }
.clock { display: flex; flex-direction: column; align-items: center; width: 64px; line-height: 18px; margin-right: 5px; letter-spacing: -.35px; }
```
